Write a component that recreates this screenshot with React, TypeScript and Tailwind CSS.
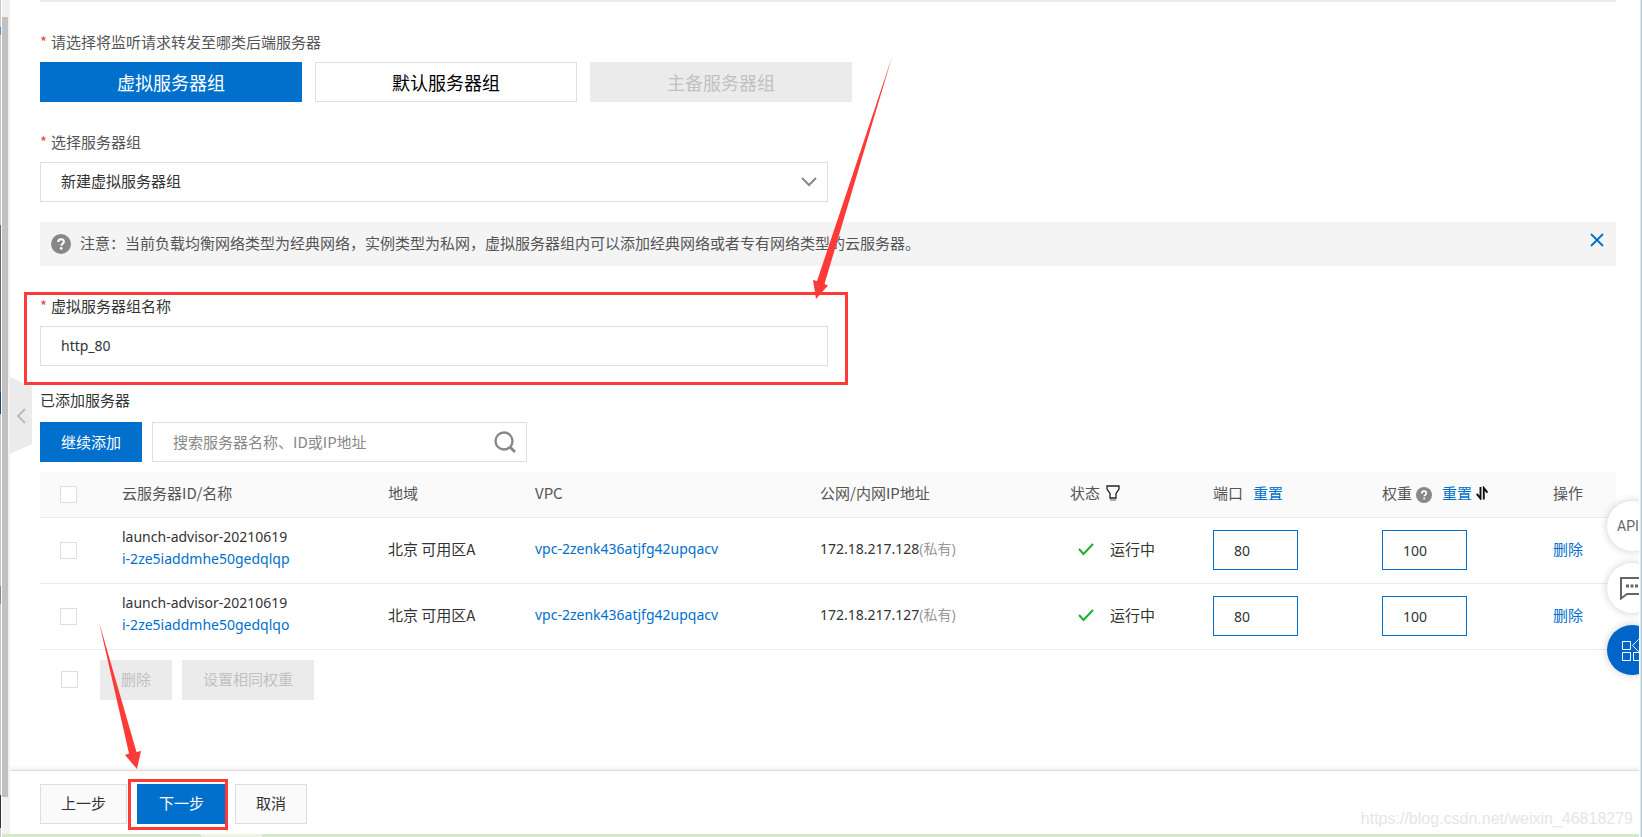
import { useState } from 'react';

interface Server {
  id: string;
  name: string;
  zone: string;
  vpc: string;
  ip: string;
}

const servers: Server[] = [
  {
    id: 'i-2ze5iaddmhe50gedqlqp',
    name: 'launch-advisor-20210619',
    zone: '北京 可用区A',
    vpc: 'vpc-2zenk436atjfg42upqacv',
    ip: '172.18.217.128',
  },
  {
    id: 'i-2ze5iaddmhe50gedqlqo',
    name: 'launch-advisor-20210619',
    zone: '北京 可用区A',
    vpc: 'vpc-2zenk436atjfg42upqacv',
    ip: '172.18.217.127',
  },
];

const HelpIcon = ({ className }: { className: string }) => (
  <svg viewBox="0 0 20 20" className={className} aria-hidden="true">
    <circle cx="10" cy="10" r="10" fill="#888" />
    <path
      d="M7.2 8.1c0-1.8 1.2-2.9 2.9-2.9s2.8 1 2.8 2.5c0 2-2.6 2-2.6 4"
      fill="none"
      stroke="#fff"
      strokeWidth="2"
    />
    <circle cx="10.2" cy="14.4" r="1.3" fill="#fff" />
  </svg>
);

const FilterIcon = () => (
  <svg viewBox="0 0 14 16" className="h-4 w-3.5" fill="none" aria-hidden="true">
    <path d="M1 1h12v3l-3 4.500v4.500H4V8.500L1 4z" stroke="#222" strokeWidth="1.300" />
    <path d="M4 15h6" stroke="#777" strokeWidth="1.200" />
  </svg>
);

const SortIcon = () => (
  <svg viewBox="0 0 12 14" className="h-3.5 w-3" fill="none" aria-hidden="true">
    <path d="M4.500 1v11.500L0.800 7.800M7.800 13.500V2l3.600 4.600" stroke="#111" strokeWidth="1.900" />
  </svg>
);

const CheckIcon = () => (
  <svg viewBox="0 0 16 14" className="h-3.5 w-4" fill="none" aria-hidden="true">
    <path d="M1 7l4.500 5L15 2" stroke="#1eae32" strokeWidth="2" />
  </svg>
);

const Checkbox = ({ label }: { label: string }) => (
  <input
    type="checkbox"
    aria-label={label}
    className="block h-[17px] w-[17px] shrink-0 appearance-none border border-[#dedede] bg-white checked:bg-[#0070cc]"
  />
);

const Required = () => <span className="mr-1 text-[#e04a3f]">*</span>;

const NumberField = ({ label, value }: { label: string; value: string }) => (
  <input
    aria-label={label}
    defaultValue={value}
    className="block h-10 w-[85px] border border-[#0070cc] bg-white px-5 font-['Noto_Sans'] text-sm text-[#333] outline-none"
  />
);

const ServerRow = ({ server }: { server: Server }) => (
  <tr className="h-[66px] border-b border-[#ebebeb]">
    <td className="px-5">
      <Checkbox label={server.id} />
    </td>
    <td className="px-5 pb-1 font-['Noto_Sans'] text-sm leading-[22px]">
      <div>{server.name}</div>
      <a href="#" className="text-[#0070cc]">{server.id}</a>
    </td>
    <td className="px-5 pb-0.5">{server.zone}</td>
    <td className="px-5 pb-0.5 font-['Noto_Sans'] text-sm">
      <a href="#" className="text-[#0070cc]">{server.vpc}</a>
    </td>
    <td className="px-5 pb-0.5 font-['Noto_Sans','Noto_Sans_CJK_SC',sans-serif] text-sm">
      {server.ip}
      <span className="text-[#999]">(私有)</span>
    </td>
    <td className="px-5 pb-0.5">
      <div className="flex items-center gap-4 pl-2">
        <CheckIcon />
        运行中
      </div>
    </td>
    <td className="px-5">
      <NumberField label="端口" value="80" />
    </td>
    <td className="px-5">
      <NumberField label="权重" value="100" />
    </td>
    <td className="pb-0.5 pl-5">
      <a href="#" className="text-[#0070cc]">删除</a>
    </td>
  </tr>
);

const ServerTable = () => (
  <table className="mt-2.5 w-full table-fixed border-collapse text-left">
    <colgroup>
      <col className="w-[62px]" />
      <col className="w-[266px]" />
      <col className="w-[147px]" />
      <col className="w-[285px]" />
      <col className="w-[250px]" />
      <col className="w-[143px]" />
      <col className="w-[169px]" />
      <col className="w-[171px]" />
      <col className="w-[83px]" />
    </colgroup>
    <thead>
      <tr className="h-[45px] border-b border-[#ebebeb] bg-[#fafafa] text-[#555]">
        <th className="px-5 font-normal">
          <Checkbox label="全选" />
        </th>
        <th className="px-5 pb-0.5 font-normal">云服务器ID/名称</th>
        <th className="px-5 pb-0.5 font-normal">地域</th>
        <th className="px-5 pb-0.5 font-normal">VPC</th>
        <th className="px-5 pb-0.5 font-normal">公网/内网IP地址</th>
        <th className="px-5 pb-0.5 font-normal">
          <div className="flex items-center gap-1.5">
            状态
            <FilterIcon />
          </div>
        </th>
        <th className="px-5 pb-0.5 font-normal">
          <div className="flex items-center gap-2.5">
            端口
            <a href="#" className="text-[#0070cc]">重置</a>
          </div>
        </th>
        <th className="px-5 pb-0.5 font-normal">
          <div className="flex items-center gap-1">
            权重
            <HelpIcon className="mt-1 h-4 w-4" />
            <a href="#" className="ml-1.5 text-[#0070cc]">重置</a>
            <SortIcon />
          </div>
        </th>
        <th className="pb-0.5 pl-5 font-normal">操作</th>
      </tr>
    </thead>
    <tbody>
      {servers.map((server) => (
        <ServerRow key={server.id} server={server} />
      ))}
    </tbody>
  </table>
);

const FloatingTools = () => (
  <nav className="absolute top-[501px] -right-[18px] flex flex-col gap-3">
    <button
      aria-label="API"
      className="flex h-[50px] w-[50px] items-center rounded-full bg-white pl-2.5 font-[Roboto] text-sm text-[#666] shadow-[0_0_8px_rgba(0,0,0,0.2)]"
    >
      API
    </button>
    <button
      aria-label="咨询"
      className="flex h-[50px] w-[50px] items-center rounded-full bg-white pl-3 shadow-[0_0_8px_rgba(0,0,0,0.2)]"
    >
      <svg viewBox="0 0 26 24" className="h-6 w-[26px]" fill="none" aria-hidden="true">
        <path d="M2 2h22v16H8l-6 4.500z" stroke="#666" strokeWidth="2" />
        <path d="M7 10h3M11.500 10h3M16 10h3" stroke="#666" strokeWidth="3" />
      </svg>
    </button>
    <button
      aria-label="应用"
      className="flex h-[50px] w-[50px] items-center rounded-full bg-[#0064c8] pl-[15px] shadow-[0_0_8px_rgba(0,0,0,0.2)]"
    >
      <svg viewBox="0 0 22 22" className="h-[22px] w-[22px]" fill="none" stroke="#fff" aria-hidden="true">
        <path d="M.5 2.500h8v8h-8zM.5 13.500h8v8h-8zM11.500 13.500h8v8h-8zM16.500 .5l6 6-6 6-6-6z" />
      </svg>
    </button>
  </nav>
);

// red markers that point out the name field and the next button
const Arrows = () => (
  <svg
    viewBox="0 0 900 780"
    className="pointer-events-none absolute top-0 left-0 h-[780px] w-[900px]"
    fill="#fc3a38"
    aria-hidden="true"
  >
    <path d="M892 57L817 281l-4-1 3 19 12-13.500-3.500-1.500z" />
    <path d="M99 622l30 131.500-4 1.500 12 14 4-18-4.500 1z" />
  </svg>
);

const App = () => {
  const [showNotice, setShowNotice] = useState(true);
  const [groupName, setGroupName] = useState('http_80');

  return (
    <div className="relative flex min-h-screen overflow-hidden bg-white font-['Noto_Sans_CJK_SC',sans-serif] text-[15px] leading-[22px] text-[#333]">
      <div className="mr-px w-px shrink-0 bg-[linear-gradient(#c8c8c8_27px,#4a90c4_27px_35px,#c8c8c8_35px_225px,#666_225px_392px,#1a4a78_392px_414px,#c8c8c8_414px_586px,#888_586px_604px,#c8c8c8_604px_795px,#333_795px_828px,#c8c8c8_828px)]" />

      <div className="flex min-w-0 flex-1 flex-col">
        <div className="flex flex-1">
          <div className="w-2 shrink-0 bg-[#f1f1f1] pt-[17px]">
            <div className="h-[780px] w-1.5 bg-[#c1c1c1]" />
          </div>

          <main className="relative flex min-w-0 flex-1 flex-col overflow-hidden">
            <div className="absolute top-[377px] left-0 flex h-[77px] w-[22px] items-center justify-center bg-[#ebebeb] [clip-path:polygon(0_0,100%_10px,100%_67px,0_100%)]">
              <svg viewBox="0 0 10 16" className="h-4 w-2.5" fill="none" aria-hidden="true">
                <path d="M9 1L2 8l7 7" stroke="#bbb" strokeWidth="2" />
              </svg>
            </div>

            <div className="flex-1 pr-[23px] pl-[30px]">
              <div className="mb-[29px] h-0.5 bg-[#ebebeb]" />

              <div className="mb-[9px] text-[#555]">
                <Required />
                请选择将监听请求转发至哪类后端服务器
              </div>
              <div className="flex gap-[13px] text-lg">
                <button className="h-10 w-[262px] bg-[#0070cc] text-white">虚拟服务器组</button>
                <button className="h-10 w-[262px] border border-[#dedede] text-black">默认服务器组</button>
                <button disabled className="h-10 w-[262px] bg-[#ebebeb] text-[#c1c1c1]">
                  主备服务器组
                </button>
              </div>

              <label htmlFor="group" className="mt-[29px] mb-[9px] block text-[#555]">
                <Required />
                选择服务器组
              </label>
              <div className="relative w-full max-w-[788px]">
                <select
                  id="group"
                  className="block h-10 w-full appearance-none border border-[#dedede] bg-white px-5 pb-0.5 outline-none"
                >
                  <option>新建虚拟服务器组</option>
                </select>
                <svg
                  viewBox="0 0 16 10"
                  className="pointer-events-none absolute top-[15px] right-[11px] h-2.5 w-4"
                  fill="none"
                  aria-hidden="true"
                >
                  <path d="M1 1l7 7 7-7" stroke="#888" strokeWidth="2" />
                </svg>
              </div>

              {showNotice && (
                <div className="mt-5 flex h-11 items-center bg-[#f4f4f4] pr-3 pl-[11px] text-[#555]">
                  <HelpIcon className="mr-[9px] h-5 w-5 shrink-0" />
                  <p className="flex-1 pb-0.5">
                    注意：当前负载均衡网络类型为经典网络，实例类型为私网，虚拟服务器组内可以添加经典网络或者专有网络类型的云服务器。
                  </p>
                  <button aria-label="关闭" className="mb-2" onClick={() => setShowNotice(false)}>
                    <svg viewBox="0 0 14 14" className="h-3.5 w-3.5" fill="none" aria-hidden="true">
                      <path d="M1 1l12 12M13 1L1 13" stroke="#0070cc" strokeWidth="1.800" />
                    </svg>
                  </button>
                </div>
              )}

              <div className="relative mt-[29px] w-full max-w-[788px]">
                <label htmlFor="name" className="mb-[9px] block">
                  <Required />
                  虚拟服务器组名称
                </label>
                <input
                  id="name"
                  value={groupName}
                  onChange={(e) => setGroupName(e.target.value)}
                  className="block h-10 w-full border border-[#dedede] bg-white px-5 pb-0.5 font-['Noto_Sans'] text-sm outline-none"
                />
                <div className="pointer-events-none absolute -top-[3px] -right-5 -bottom-[19px] -left-4 border-3 border-[#fc3a38]" />
              </div>

              <h2 className="mt-[23px] mb-[11px]">已添加服务器</h2>
              <div className="flex gap-2.5">
                <button className="h-10 border border-[#0070cc] bg-[#0070cc] px-5 text-white">继续添加</button>
                <div className="flex h-10 w-[375px] items-center border border-[#dedede] pr-2.5 pl-5">
                  <input
                    aria-label="搜索"
                    placeholder="搜索服务器名称、ID或IP地址"
                    className="min-w-0 flex-1 outline-none placeholder:text-[#888]"
                  />
                  <svg viewBox="0 0 22 22" className="h-[22px] w-[22px]" fill="none" aria-hidden="true">
                    <circle cx="10" cy="10" r="8.500" stroke="#888" strokeWidth="2.400" />
                    <path d="M16 16l5 5" stroke="#888" strokeWidth="2.800" />
                  </svg>
                </div>
              </div>

              <ServerTable />

              <div className="my-2.5 flex items-center pl-[21px]">
                <Checkbox label="选择全部服务器" />
                <button
                  disabled
                  className="ml-[22px] h-10 border border-[#ebebeb] bg-[#ebebeb] px-5 pb-0.5 text-[#c1c1c1]"
                >
                  删除
                </button>
                <button
                  disabled
                  className="ml-2.5 h-10 border border-[#ebebeb] bg-[#ebebeb] px-5 pb-0.5 text-[#c1c1c1]"
                >
                  设置相同权重
                </button>
              </div>
            </div>

            <footer className="flex border-t border-[#dedede] pt-[13px] pb-2.5 pl-[30px] shadow-[0_-1px_4px_rgba(0,0,0,0.1)]">
              <button className="h-10 border border-[#dedede] bg-[#fafafa] px-5 pb-0.5">上一步</button>
              <div className="relative mr-[9px] ml-2.5">
                <button className="h-10 bg-[#0070cc] px-[22px] pb-0.5 text-white">下一步</button>
                <div className="pointer-events-none absolute -top-[5px] -right-[2px] -bottom-1.5 -left-[9px] border-3 border-[#fc3a38]" />
              </div>
              <button className="h-10 border border-[#dedede] bg-[#fafafa] px-5 pb-0.5">取消</button>
            </footer>

            <FloatingTools />
          </main>
        </div>
        <div className="h-[3px] bg-[linear-gradient(90deg,#d3e9c8_199px,#ebf5e6_199px_260px,#d3e9c8_260px)]" />
      </div>

      <div className="w-[3px] shrink-0 border-l border-white bg-[linear-gradient(90deg,#d5eaf2_1px,#b9c6cc_1px)]" />

      <Arrows />
      <span className="pointer-events-none absolute right-[9px] bottom-1.5 font-['Liberation_Sans'] text-base text-[#e6e6e6]">
        https://blog.csdn.net/weixin_46818279
      </span>
    </div>
  );
};

export default App;
